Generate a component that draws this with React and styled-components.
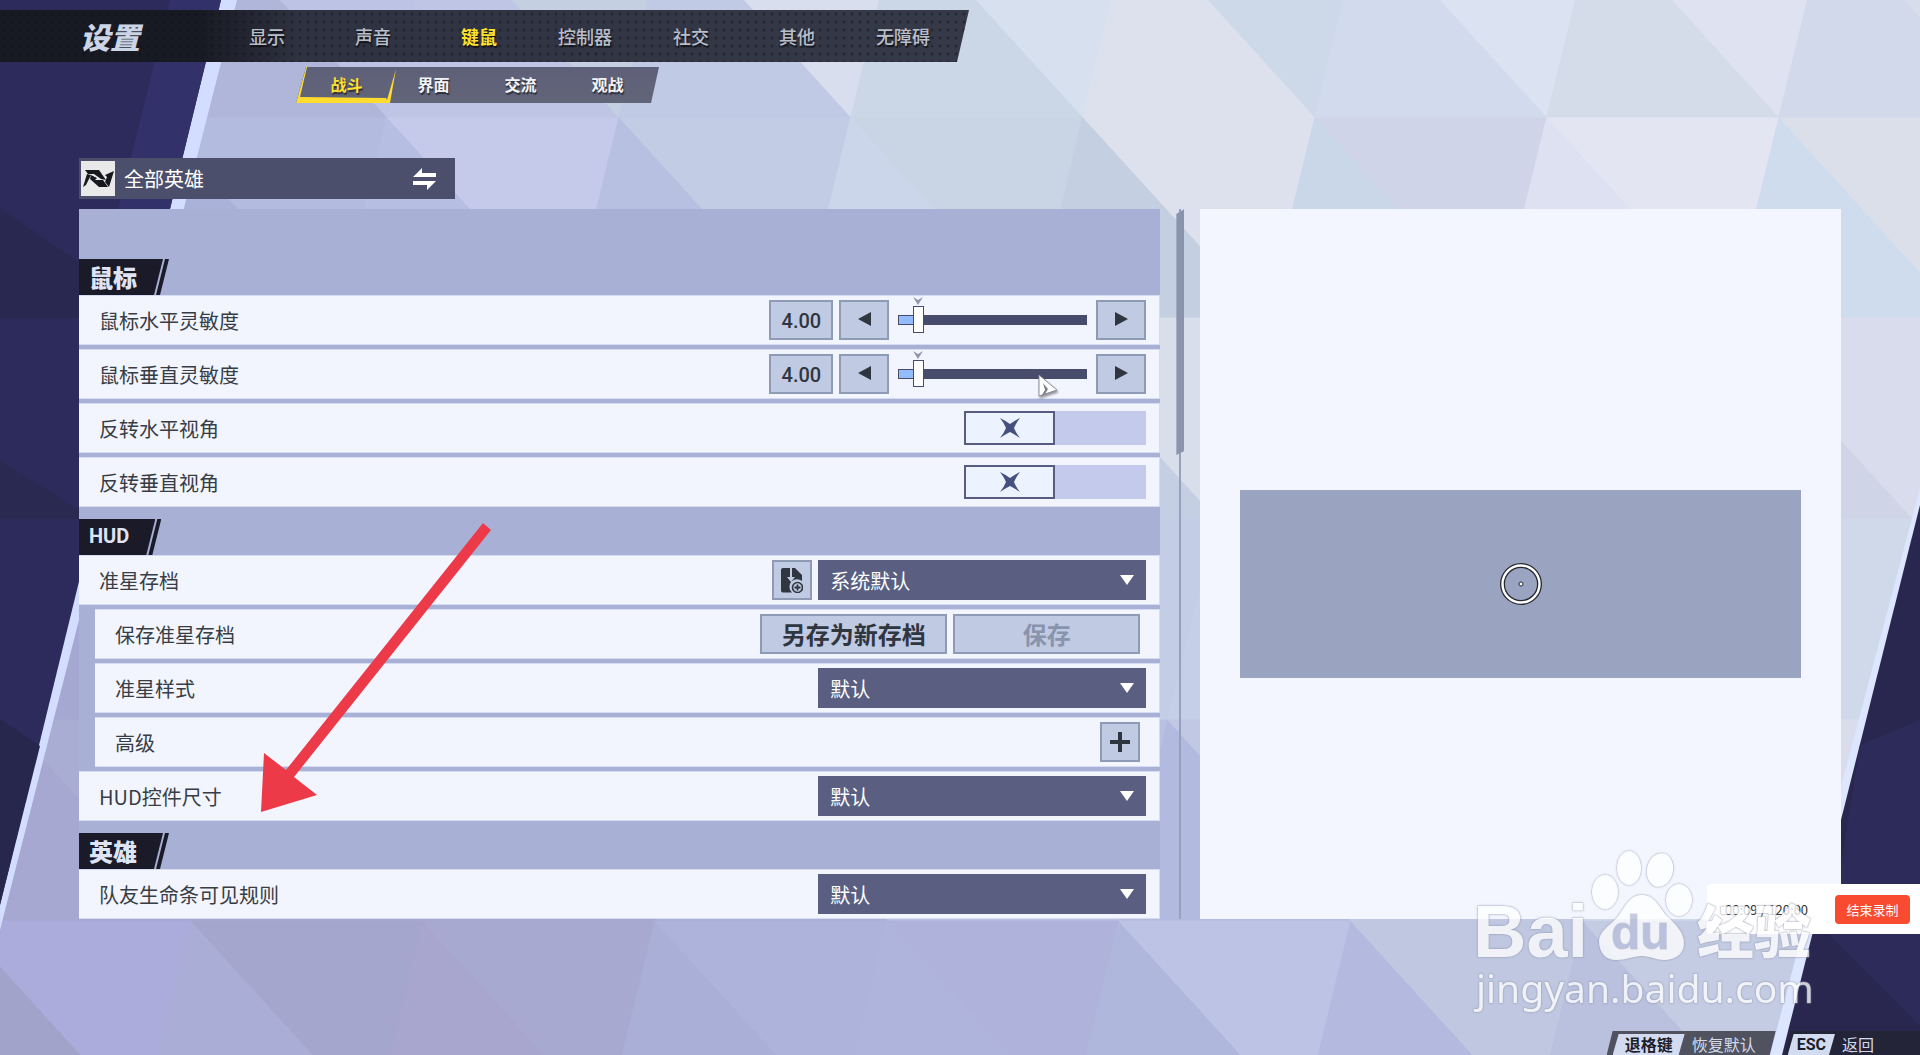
import React, { useState } from "react";
import styled, { createGlobalStyle, css } from "styled-components";

const TABS = ["显示", "声音", "键鼠", "控制器", "社交", "其他", "无障碍"];
const SUB_TABS = ["战斗", "界面", "交流", "观战"];

// one entry per lattice row: [lower, upper] colour of every cell
const FACETS = {
  "-1": [
    ["#b0b6da", "#bcc3e4"],
    ["#bfc5e5", "#c5cfe2"],
    ["#c0cae4", "#d8deee"],
    ["#cbd6e6", "#d6e0ef"],
    ["#dde1ed", "#cdd8e8"],
    ["#d1dbed", "#dbe2f2"],
    ["#d4dbe9", "#dee2f1"],
    ["#d2d9ea", "#d8ddec"],
    ["#d8ddec", "#d8ddec"],
  ],
  0: [
    ["#abb2da", "#b3bbdf"],
    ["#b6bee2", "#c5caeb"],
    ["#b8c0e2", "#c2cce4"],
    ["#cbd6ea", "#c9d5e5"],
    ["#c4d0e1", "#dde1ed"],
    ["#cad7e8", "#cfd4e8"],
    ["#dde1f1", "#e3e6f2"],
    ["#cfdcee", "#dbdfea"],
    ["#dbdfea", "#dbdfea"],
  ],
  1: [
    ["#a5a8d0", "#a8acd4"],
    ["#a8acd4", "#a8acd4"],
    ["#b6bee2", "#b6bee2"],
    ["#c5cfe4", "#c5cfe4"],
    ["#c5cfe4", "#d8dfea"],
    ["#d8dfea", "#d8dfea"],
    ["#d4dbe9", "#d4dbe9"],
    ["#cfd5e6", "#d8dcec"],
    ["#d8dcec", "#d8dcec"],
  ],
  2: [
    ["#a5a8d0", "#a5a8d0"],
    ["#a8acd4", "#a8acd4"],
    ["#a8acd4", "#a8acd4"],
    ["#b6bee2", "#b6bee2"],
    ["#c5cfe4", "#c3cde5"],
    ["#c6cfe8", "#c6cfe8"],
    ["#cfd9ea", "#cfd9ea"],
    ["#cfd9ea", "#cfd9ea"],
    ["#cfd9ea", "#cfd9ea"],
  ],
  3: [
    ["#a6a8d1", "#a9add3"],
    ["#a8a9d2", "#a8a9d2"],
    ["#a8a9d2", "#a8a9d2"],
    ["#a8b0d8", "#a8b0d8"],
    ["#b9c0e0", "#b9c0e0"],
    ["#b3badf", "#c0c8e4"],
    ["#c0c8e4", "#c0c8e4"],
    ["#cfd9ea", "#d9dcea"],
    ["#d9dcea", "#d9dcea"],
  ],
  4: [
    ["#a1a3ca", "#abacdb"],
    ["#aaadd6", "#a4a6ce"],
    ["#a8a5cf", "#a7a9d1"],
    ["#a9afd6", "#adb3da"],
    ["#aeb4db", "#afb3dc"],
    ["#afb7dc", "#bcc3e4"],
    ["#b3b9df", "#c0c8e1"],
    ["#bac1df", "#c4cce4"],
    ["#c4cce4", "#c4cce4"],
  ],
};

const vertex = (i, j) => `${155 + 232 * i - 49 * j},${117 + 201 * j}`;

function Backdrop() {
  return (
    <BackdropSvg viewBox="0 0 1920 1055" preserveAspectRatio="none" aria-hidden="true">
      {Object.entries(FACETS).map(([row, cells]) => {
        const j = Number(row);
        return cells.map(([lower, upper], i) => (
          <g key={`${j}:${i}`}>
            <polygon
              points={`${vertex(i, j)} ${vertex(i + 1, j + 1)} ${vertex(i, j + 1)}`}
              fill={lower}
              stroke={lower}
            />
            <polygon
              points={`${vertex(i, j)} ${vertex(i + 1, j)} ${vertex(i + 1, j + 1)}`}
              fill={upper}
              stroke={upper}
            />
          </g>
        ));
      })}
      <polygon points="0,0 237,0 0,930" fill="#d2ddff" />
      <polygon points="0,0 221,0 0,905" fill="#2d2b5b" />
      <polygon points="170,0 221,0 110,455 118,209" fill="#33316a" />
      <polygon points="0,208 79,262 79,318 0,318" fill="#292850" />
      <polygon points="0,460 79,510 79,519 0,519" fill="#2a2952" />
      <polygon points="0,719 40,746 0,905" fill="#27264c" />
      <polygon points="1920,488 1920,1055 1770,1055" fill="#dce6ff" />
      <polygon points="1920,505 1920,1055 1782,1055" fill="#29274f" />
      <polygon points="1920,720 1920,1026 1830,935 1860,745" fill="#2d2b5a" />
    </BackdropSvg>
  );
}

function SliderRow({ id, label }) {
  const [value, setValue] = useState(4);
  const step = (by) => setValue(Math.min(50, Math.max(0, value + by)));
  return (
    <Row>
      <RowLabel htmlFor={id}>{label}</RowLabel>
      <Controls>
        <ValueBox aria-label={`${label}数值`} value={value.toFixed(2)} readOnly />
        <StepButton aria-label="减少" onClick={() => step(-1)}>
          <svg width="13" height="14" viewBox="0 0 13 14">
            <path d="M13 0V14L0 7Z" />
          </svg>
        </StepButton>
        <SliderBox>
          <Marker viewBox="0 0 10 8" aria-hidden="true">
            <path d="M0 0L5 3L10 0L5 8Z" />
          </Marker>
          <Slider
            id={id}
            type="range"
            min="0"
            max="50"
            step="0.01"
            value={value}
            onChange={(e) => setValue(Number(e.target.value))}
            style={{ "--fill": `${value * 2}%` }}
          />
        </SliderBox>
        <StepButton aria-label="增加" onClick={() => step(1)}>
          <svg width="13" height="14" viewBox="0 0 13 14">
            <path d="M0 0V14L13 7Z" />
          </svg>
        </StepButton>
      </Controls>
    </Row>
  );
}

function ToggleRow({ id, label }) {
  const [on, setOn] = useState(false);
  return (
    <Row>
      <RowLabel htmlFor={id}>{label}</RowLabel>
      <Controls>
        <ToggleBox>
          <Toggle id={id} type="checkbox" checked={on} onChange={() => setOn(!on)} />
          <ToggleKnob $on={on}>
            <svg width="20" height="20" viewBox="0 0 20 20">
              <path d="M0 0Q6 3 10 6Q14 3 20 0Q16 5 14 10Q16 15 20 20Q14 16 10 14Q6 16 0 20Q4 15 6 10Q4 5 0 0Z" />
            </svg>
          </ToggleKnob>
        </ToggleBox>
      </Controls>
    </Row>
  );
}

function SelectRow({ id, label, value, nested, children }) {
  return (
    <Row $nested={nested}>
      <RowLabel htmlFor={id}>{label}</RowLabel>
      <Controls>
        {children}
        <SelectBox>
          <Select id={id} defaultValue={value}>
            <option>{value}</option>
          </Select>
          <svg width="14" height="10" viewBox="0 0 14 10">
            <path d="M0 0H14L7 10Z" />
          </svg>
        </SelectBox>
      </Controls>
    </Row>
  );
}

function SectionTag({ latin, children }) {
  return (
    <TagLine>
      <Tag $latin={latin}>{children}</Tag>
      <TagSlash />
    </TagLine>
  );
}

function Watermark() {
  return (
    <WatermarkSvg viewBox="0 0 350 200" aria-hidden="true">
      <text x="3" y="112" fontSize="74" fontWeight="700" className="latin">Bai</text>
      <ellipse cx="135" cy="47" rx="13" ry="17" />
      <ellipse cx="159" cy="23" rx="12" ry="17" />
      <ellipse cx="190" cy="25" rx="13" ry="17" transform="rotate(12 190 25)" />
      <ellipse cx="209" cy="55" rx="13" ry="16" />
      <path d="M172 50C184 50 188 60 196 70C206 80 214 87 214 98C214 110 204 115 194 115C186 115 180 111 172 111C164 111 156 115 146 115C136 115 129 108 129 96C130 84 142 80 149 70C156 60 160 50 172 50Z" />
      <text x="141" y="104" fontSize="48" fontWeight="700" className="latin du">du</text>
      <text x="227" y="108" fontSize="57" fontWeight="900">经验</text>
      <text x="6" y="158" fontSize="39" className="url">jingyan.baidu.com</text>
    </WatermarkSvg>
  );
}

export default function App() {
  const [tab, setTab] = useState("键鼠");
  const [subTab, setSubTab] = useState("战斗");
  return (
    <Page>
      <GlobalStyle />
      <Backdrop />
      <Header>
        <Title>设置</Title>
        <Tabs>
          {TABS.map((name) => (
            <TabButton key={name} $active={name === tab} onClick={() => setTab(name)}>
              {name}
            </TabButton>
          ))}
        </Tabs>
      </Header>
      <SubNav>
        {SUB_TABS.map((name) => (
          <SubTab key={name} $active={name === subTab} onClick={() => setSubTab(name)}>
            {name === subTab && (
              <SubTabFrame viewBox="0 0 100 36" aria-hidden="true">
                <path d="M10 0L0 36H94L100 2L91 33L90 31L4 30L11 0Z" />
              </SubTabFrame>
            )}
            {name}
          </SubTab>
        ))}
      </SubNav>
      <HeroButton>
        <HeroLogo viewBox="0 0 34 35" aria-hidden="true">
          <rect width="34" height="35" fill="#e9e9ea" />
          <path d="M4 9H18L25 19L20 18L13 13L7 13Z" />
          <path d="M6 13L10 14L5 24L2 26Z" />
          <path d="M10 14L16 17L14 19L22 19L27 26H18L9 18Z" />
          <path d="M33 10L28 26L24 21L26 16L24 14Z" />
        </HeroLogo>
        全部英雄
        <SwapIcon viewBox="0 0 23 22" aria-hidden="true">
          <path d="M0 9L9 0V5H23V9ZM0 13H23L14 22V17H0Z" />
        </SwapIcon>
      </HeroButton>
      <Main>
        <Panel>
          <Section>
            <SectionTag>鼠标</SectionTag>
            <SliderRow id="mouse-x" label="鼠标水平灵敏度" />
            <SliderRow id="mouse-y" label="鼠标垂直灵敏度" />
            <ToggleRow id="invert-x" label="反转水平视角" />
            <ToggleRow id="invert-y" label="反转垂直视角" />
          </Section>
          <Section>
            <SectionTag latin>HUD</SectionTag>
            <SelectRow id="crosshair-save" label="准星存档" value="系统默认">
              <SquareButton aria-label="导入存档">
                <svg width="22" height="25" viewBox="0 0 22 25">
                  <path d="M0 2Q0 0 2 0H9V9H6L10 14L14 9H11V0H14L21 7V13A6.5 6.5 0 0 0 11 24.5H2Q0 24.5 0 22.5Z" />
                  <circle cx="16.5" cy="19.5" r="5" fill="#c0cae3" stroke="#2f3640" strokeWidth="1.6" />
                  <path d="M15.600 16.500H17.400V18.600H19.500V20.400H17.400V22.500H15.600V20.400H13.500V18.600H15.600Z" />
                </svg>
              </SquareButton>
            </SelectRow>
            <Row $nested>
              <RowLabel as="span">保存准星存档</RowLabel>
              <Controls $inset>
                <WideButton>另存为新存档</WideButton>
                <WideButton disabled>保存</WideButton>
              </Controls>
            </Row>
            <SelectRow id="crosshair-style" label="准星样式" value="默认" nested />
            <Row $nested>
              <RowLabel as="span">高级</RowLabel>
              <Controls $inset>
                <SquareButton aria-label="展开高级">
                  <svg width="20" height="20" viewBox="0 0 20 20">
                    <path d="M8 0H12V8H20V12H12V20H8V12H0V8H8Z" />
                  </svg>
                </SquareButton>
              </Controls>
            </Row>
            <SelectRow id="hud-size" label="HUD控件尺寸" value="默认" />
          </Section>
          <Section>
            <SectionTag>英雄</SectionTag>
            <SelectRow id="team-bar" label="队友生命条可见规则" value="默认" />
          </Section>
        </Panel>
        <ScrollTrack>
          <ScrollThumb />
        </ScrollTrack>
        <PreviewPanel>
          <PreviewBox>
            <svg width="44" height="44" viewBox="0 0 44 44">
              <circle cx="22" cy="22" r="18.5" fill="none" stroke="#25282f" strokeWidth="5" />
              <circle cx="22" cy="22" r="18.5" fill="none" stroke="#fff" strokeWidth="2.4" />
              <circle cx="22" cy="22" r="2" fill="#fff" stroke="#25282f" strokeWidth="1" />
            </svg>
          </PreviewBox>
        </PreviewPanel>
      </Main>
      <Footer>
        <FooterBar>
          <KeyCap>退格键</KeyCap>
          恢复默认
        </FooterBar>
        <FooterBar $dark>
          <KeyCap $latin>ESC</KeyCap>
          返回
        </FooterBar>
      </Footer>
      <Recorder>
        <time>00:09 / 120:00</time>
        <StopButton>结束录制</StopButton>
      </Recorder>
      <Watermark />
      <Arrow viewBox="0 0 232 290" aria-hidden="true">
        <path d="M223 0L231 7L34 254L57 272L1 289L4 230L26 247Z" />
      </Arrow>
      <Cursor viewBox="0 0 20 23" aria-hidden="true">
        <path d="M1 1L19 16L1 22Z" fill="#fff" stroke="#8d8f98" />
        <path d="M5 9L10 15L7 20L4 21L7 16Z" fill="#7d7f88" />
      </Cursor>
    </Page>
  );
}

const GlobalStyle = createGlobalStyle`
  * {
    box-sizing: border-box;
  }

  body {
    margin: 0;
    font-family: "Noto Sans CJK SC", "Noto Sans", sans-serif;
  }

  button, input, select {
    margin: 0;
    padding: 0;
    border: 0;
    border-radius: 0;
    font-family: inherit;
  }

  button {
    cursor: pointer;
  }
`;

const Page = styled.div`
  position: relative;
  display: flex;
  flex-direction: column;
  align-items: flex-start;
  height: 100vh;
  min-height: 960px;
  padding-top: 10px;
  overflow: hidden;
  isolation: isolate;
`;

const BackdropSvg = styled.svg`
  position: absolute;
  inset: 0;
  z-index: -1;
  width: 100%;
  height: 100%;
`;

const Header = styled.header`
  display: flex;
  align-items: center;
  height: 52px;
  padding: 0 13px 0 80px;
  background:
    radial-gradient(circle, rgba(10, 12, 20, 0.35) 1px, transparent 2px) 0 0 / 8px 8px,
    linear-gradient(90deg, #181a23 200px, #2f3240 300px, #363947);
  clip-path: polygon(0 0, 100% 0, calc(100% - 12px) 100%, 0 100%);
`;

const Title = styled.h1`
  width: 134px;
  margin: 0;
  color: #ccd5e6;
  font-size: 30px;
  font-style: italic;
  font-weight: 900;
  line-height: 50px;
`;

const Tabs = styled.nav`
  display: flex;
`;

const TabButton = styled.button`
  width: 106px;
  height: 52px;
  background: none;
  color: ${({ $active }) => ($active ? "#ffe02c" : "#b9becb")};
  font-size: 18px;
  font-weight: ${({ $active }) => ($active ? 700 : 500)};
  text-shadow: 1px 2px 1px rgba(0, 0, 0, 0.6);
`;

const SubNav = styled.nav`
  display: flex;
  margin: 5px 0 0 296px;
  padding: 0 8px 0 7px;
  background: linear-gradient(#5d6078, #626579);
  clip-path: polygon(10px 0, 100% 0, calc(100% - 8px) 100%, 0 100%);
`;

const SubTab = styled.button`
  position: relative;
  width: 87px;
  height: 36px;
  padding-bottom: 2px;
  background: none;
  color: ${({ $active }) => ($active ? "#ffe02c" : "#f2f3f6")};
  font-size: 16px;
  font-weight: 700;
  text-shadow: 1px 2px 1px rgba(0, 0, 0, 0.55);
`;

const SubTabFrame = styled.svg`
  position: absolute;
  top: 0;
  left: -7px;
  width: 100px;
  height: 36px;
  fill: #ffdc2e;
`;

const HeroButton = styled.button`
  display: flex;
  align-items: center;
  gap: 9px;
  width: 376px;
  height: 41px;
  margin: 55px 0 10px 79px;
  padding: 0 19px 0 2px;
  background: #4b4f6c;
  color: #fff;
  font-size: 20px;
`;

const HeroLogo = styled.svg`
  width: 34px;
  height: 35px;
  fill: #17181d;
`;

const SwapIcon = styled.svg`
  width: 23px;
  height: 22px;
  margin-left: auto;
  fill: #fff;
`;

const Main = styled.main`
  display: grid;
  grid-template-columns: minmax(0, 1082fr) 8px minmax(0, 641fr);
  column-gap: 16px;
  align-self: stretch;
  padding: 0 79px 0 79px;
`;

const Panel = styled.div`
  padding-top: 38px;
  background: #a8b0d5;
`;

const Section = styled.section`
  display: flex;
  flex-direction: column;
  gap: 4px;
  padding-top: 12px;
`;

const TagLine = styled.div`
  display: flex;
  height: 36px;
  margin-bottom: -4px;
`;

const Tag = styled.h2`
  margin: 0;
  padding: 0 26px 0 10px;
  background: #1a1a28;
  color: #dfe4f5;
  font-family: ${({ $latin }) => ($latin ? "Roboto, sans-serif" : "inherit")};
  font-size: ${({ $latin }) => ($latin ? 20 : 24)}px;
  font-weight: ${({ $latin }) => ($latin ? 700 : 900)};
  line-height: 35px;
  clip-path: polygon(0 0, 100% 0, calc(100% - 9px) 100%, 0 100%);
`;

const TagSlash = styled.span`
  width: 13px;
  margin-left: -7px;
  background: #1a1a28;
  clip-path: polygon(9px 0, 13px 0, 4px 100%, 0 100%);
`;

const Row = styled.div`
  display: flex;
  align-items: center;
  justify-content: space-between;
  height: 50px;
  padding-left: 20px;
  border: 1px solid #d5dcf1;
  border-left-width: 0;
  background: #f2f5fe;
  ${({ $nested }) =>
    $nested &&
    css`
      margin-left: 16px;
    `}
`;

const RowLabel = styled.label`
  color: #383d45;
  font-size: 20px;
  font-weight: 400;
`;

const Controls = styled.div`
  display: flex;
  align-items: center;
  gap: 6px;
  padding-right: ${({ $inset }) => ($inset ? 19 : 13)}px;
`;

const boxed = css`
  height: 40px;
  border: 2px solid #8e9bb4;
  background: #c0cae3;
  color: #2f3640;
  fill: #2f3640;
`;

const ValueBox = styled.input`
  ${boxed}
  width: 64px;
  padding-top: 2px;
  font-family: Roboto, sans-serif;
  font-size: 20px;
  font-weight: 500;
  text-align: center;
`;

const StepButton = styled.button`
  ${boxed}
  width: 50px;
`;

const SquareButton = styled.button`
  ${boxed}
  display: grid;
  place-items: center;
  width: 40px;
`;

const WideButton = styled.button`
  ${boxed}
  width: 187px;
  font-size: 24px;
  font-weight: 700;
  line-height: 36px;

  &:disabled {
    color: #8993ac;
  }
`;

const SliderBox = styled.div`
  position: relative;
  display: flex;
  align-items: center;
  width: 195px;
  height: 40px;
  padding: 0 3px;
`;

const Marker = styled.svg`
  position: absolute;
  top: -3px;
  left: 18px;
  width: 10px;
  height: 8px;
  fill: #8f97ab;
`;

const Slider = styled.input`
  width: 189px;
  height: 27px;
  background: none;
  appearance: none;

  &::-webkit-slider-runnable-track {
    height: 10px;
    border: 1px solid #484c6b;
    background: linear-gradient(90deg, #93bcff var(--fill), #484c6b var(--fill));
  }

  &::-webkit-slider-thumb {
    width: 11px;
    height: 27px;
    margin-top: -10px;
    border: 1px solid #484c6b;
    background: #fff;
    appearance: none;
  }
`;

const ToggleBox = styled.div`
  display: grid;
  width: 182px;
  height: 34px;
  background: #c3caeb;
`;

const Toggle = styled.input`
  grid-area: 1 / 1;
  width: 100%;
  height: 100%;
  appearance: none;
`;

const ToggleKnob = styled.span`
  grid-area: 1 / 1;
  display: grid;
  place-items: center;
  justify-self: ${({ $on }) => ($on ? "end" : "start")};
  width: 91px;
  border: 2px solid #575c80;
  background: #ecf3ff;
  fill: #465080;
  pointer-events: none;
`;

const SelectBox = styled.div`
  display: grid;
  align-items: center;

  svg {
    grid-area: 1 / 1;
    justify-self: end;
    margin-right: 12px;
    fill: #fff;
    pointer-events: none;
  }
`;

const Select = styled.select`
  grid-area: 1 / 1;
  width: 328px;
  height: 40px;
  padding: 0 12px;
  background: #5a5f82;
  color: #fff;
  font-size: 20px;
  appearance: none;
`;

const ScrollTrack = styled.div`
  background: linear-gradient(#97a1be, #97a1be) center / 2px 100% no-repeat;
`;

const ScrollThumb = styled.div`
  height: 246px;
  background: #8a94ac;
  clip-path: polygon(0 5px, 100% 0, 100% 242px, 0 100%);
`;

const PreviewPanel = styled.aside`
  padding: 281px 40px 0;
  background: #f3f6ff;
`;

const PreviewBox = styled.div`
  display: grid;
  place-items: center;
  height: 188px;
  background: #9aa3c0;
`;

const Footer = styled.footer`
  display: flex;
  gap: 9px;
  align-self: flex-end;
  margin-top: auto;
`;

const FooterBar = styled.div`
  display: flex;
  align-items: center;
  gap: 7px;
  height: 24px;
  padding: 3px 20px 0 6px;
  background: ${({ $dark }) => ($dark ? "#232438" : "#50535f")};
  color: #d5daea;
  font-size: 16px;
  line-height: 21px;
  clip-path: polygon(6px 0, 100% 0, calc(100% - 6px) 100%, 0 100%);
  ${({ $dark }) =>
    $dark &&
    css`
      padding: 3px 46px 0 3px;
      clip-path: polygon(6px 0, 100% 0, 100% 100%, 0 100%);
    `}
`;

const KeyCap = styled.kbd`
  padding: 0 ${({ $latin }) => ($latin ? 9 : 12)}px;
  background: #d3dbf0;
  color: #1c1e2c;
  font-family: ${({ $latin }) => ($latin ? "Roboto, sans-serif" : '"Noto Sans CJK SC", sans-serif')};
  font-size: 16px;
  font-weight: 700;
  line-height: 21px;
  clip-path: polygon(6px 0, 100% 0, calc(100% - 6px) 100%, 0 100%);
`;

const Recorder = styled.div`
  position: absolute;
  right: 0;
  bottom: 121px;
  display: flex;
  align-items: center;
  justify-content: space-between;
  width: 213px;
  height: 50px;
  padding: 0 10px 0 18px;
  border-radius: 4px 0 0 4px;
  background: #fff;
  color: #333;
  font-size: 13px;
`;

const StopButton = styled.button`
  width: 75px;
  height: 29px;
  border-radius: 4px;
  background: #f84b30;
  color: #fff;
  font-size: 13px;
`;

const WatermarkSvg = styled.svg`
  position: absolute;
  right: 100px;
  bottom: 10px;
  width: 350px;
  height: 200px;
  fill: #fff;
  stroke: rgba(150, 155, 175, 0.5);
  stroke-width: 1px;
  paint-order: stroke;
  opacity: 0.78;
  filter: drop-shadow(0 0 1px rgba(120, 125, 150, 0.6));
  pointer-events: none;

  .latin {
    font-family: "Liberation Sans", sans-serif;
  }

  .url {
    font-family: "Noto Sans", sans-serif;
  }

  .du {
    fill: #b7bfda;
  }
`;

const Arrow = styled.svg`
  position: absolute;
  top: 523px;
  left: 260px;
  width: 232px;
  height: 290px;
  fill: #ed3a48;
  pointer-events: none;
`;

const Cursor = styled.svg`
  position: absolute;
  top: 374px;
  left: 1038px;
  width: 20px;
  height: 23px;
  filter: drop-shadow(1px 2px 1px rgba(0, 0, 0, 0.4));
  pointer-events: none;
`;
